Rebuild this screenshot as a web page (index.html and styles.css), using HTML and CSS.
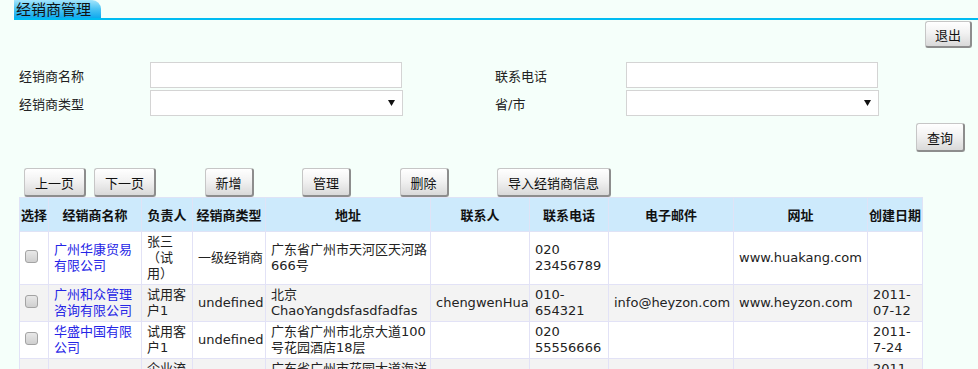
FILE: index.html
```html
<!DOCTYPE html>
<html lang="zh-CN">
<head>
<meta charset="utf-8">
<title>经销商管理</title>
<link rel="stylesheet" href="styles.css">
</head>
<body>
<div class="tabbar"><div class="tab">经销商管理</div></div>

<div class="exit-row"><button class="btn btn-exit" type="button">退出</button></div>

<form class="search">
  <label class="lbl">经销商名称</label>
  <input class="field" type="text">
  <span></span>
  <label class="lbl">联系电话</label>
  <input class="field" type="text">

  <label class="lbl">经销商类型</label>
  <div class="selbox"><select class="sel"><option></option></select><svg class="arrow" width="7" height="6" viewBox="0 0 7 6"><path d="M0 0H7L3.5 6Z" fill="#111"/></svg></div>
  <span></span>
  <label class="lbl">省/市</label>
  <div class="selbox"><select class="sel"><option></option></select><svg class="arrow" width="7" height="6" viewBox="0 0 7 6"><path d="M0 0H7L3.5 6Z" fill="#111"/></svg></div>
</form>

<div class="query-row"><button class="btn" type="button">查询</button></div>

<div class="actions">
  <div class="pager">
    <button class="btn" type="button">上一页</button>
    <button class="btn" type="button">下一页</button>
  </div>
  <button class="btn" type="button">新增</button>
  <button class="btn" type="button">管理</button>
  <button class="btn" type="button">删除</button>
  <button class="btn" type="button">导入经销商信息</button>
</div>

<table class="grid">
  <colgroup>
    <col style="width:29px"><col style="width:93px"><col style="width:51px"><col style="width:73px"><col style="width:165px"><col style="width:99px"><col style="width:79px"><col style="width:125px"><col style="width:134px"><col style="width:55px">
  </colgroup>
  <thead>
    <tr><th>选择</th><th>经销商名称</th><th>负责人</th><th>经销商类型</th><th>地址</th><th>联系人</th><th>联系电话</th><th>电子邮件</th><th>网址</th><th>创建日期</th></tr>
  </thead>
  <tbody>
    <tr>
      <td><input class="chk" type="checkbox"></td>
      <td><a class="name" href="#">广州华康贸易有限公司</a></td>
      <td>张三（试用）</td>
      <td>一级经销商</td>
      <td>广东省广州市天河区天河路666号</td>
      <td></td>
      <td>020 23456789</td>
      <td></td>
      <td>www.huakang.com</td>
      <td></td>
    </tr>
    <tr class="alt">
      <td><input class="chk" type="checkbox"></td>
      <td><a class="name" href="#">广州和众管理咨询有限公司</a></td>
      <td>试用客户1</td>
      <td>undefined</td>
      <td>北京ChaoYangdsfasdfadfas</td>
      <td>chengwenHua</td>
      <td>010-654321</td>
      <td>info@heyzon.com</td>
      <td>www.heyzon.com</td>
      <td>2011-07-12</td>
    </tr>
    <tr>
      <td><input class="chk" type="checkbox"></td>
      <td><a class="name" href="#">华盛中国有限公司</a></td>
      <td>试用客户1</td>
      <td>undefined</td>
      <td>广东省广州市北京大道100号花园酒店18层</td>
      <td></td>
      <td>020 55556666</td>
      <td></td>
      <td></td>
      <td>2011-7-24</td>
    </tr>
    <tr class="alt">
      <td><input class="chk" type="checkbox"></td>
      <td><a class="name" href="#">海洋集团</a></td>
      <td>企业流程客户</td>
      <td>undefined</td>
      <td>广东省广州市花园大道海洋大厦</td>
      <td></td>
      <td></td>
      <td></td>
      <td></td>
      <td>2011-08-01</td>
    </tr>
  </tbody>
</table>
</body>
</html>
```

FILE: styles.css
```css
* { box-sizing: border-box; }

body {
  margin: 0;
  overflow: hidden;
  background: #f5fffa;
  font-family: "DejaVu Sans", "Noto Sans CJK SC", sans-serif;
  font-size: 13px;
  color: #222;
}

.tabbar {
  display: flex;
  margin-left: 14px;
  height: 20px;
  border-bottom: 2px solid #00bcf2;
}

.tab {
  height: 18px;
  padding: 0 10px 0 2px;
  font-family: "Noto Sans CJK SC", sans-serif;
  font-size: 15px;
  line-height: 17px;
  color: #111;
  border-radius: 0 9px 0 0;
  background: linear-gradient(to bottom, #a4e5fc 0%, #4cc4f4 50%, #10a9ee 100%);
}

.btn {
  height: 29px;
  padding: 0 10px;
  font-family: "DejaVu Sans", "Noto Sans CJK SC", sans-serif;
  font-size: 13px;
  color: #111;
  background: linear-gradient(to bottom, #ffffff 0%, #f2f2f2 45%, #d9d9d9 100%);
  border: 1px solid #c6c6c6;
  border-right: 2px solid #8d8d8d;
  border-bottom: 2px solid #8d8d8d;
  border-radius: 3px;
  cursor: pointer;
}

.btn-exit { height: 27px; padding: 0 9px; }

.exit-row {
  display: flex;
  justify-content: flex-end;
  padding-right: 6px;
  margin-top: 1px;
}

.search {
  display: grid;
  grid-template-columns: 131px 253px 92px 131px 253px;
  grid-auto-rows: 26px;
  row-gap: 2px;
  margin: 14px 0 0 19px;
}

.lbl {
  display: flex;
  align-items: center;
  color: #222;
}

.field {
  width: 252px;
  height: 26px;
  border: 1px solid #d4d4d4;
  background: #fff;
  margin: 0;
}

.selbox {
  display: flex;
  align-items: center;
  width: 253px;
  height: 26px;
  padding-right: 7px;
  border: 1px solid #d4d4d4;
  background: #fff;
}

.sel {
  flex: 1;
  height: 100%;
  border: 0;
  background: transparent;
  appearance: none;
  -webkit-appearance: none;
  outline: none;
}

.arrow { flex: none; }

.query-row {
  display: flex;
  justify-content: flex-end;
  padding-right: 13px;
  margin-top: 7px;
}

.actions {
  display: flex;
  gap: 48.5px;
  margin: 16px 0 0 24px;
}

.pager {
  display: flex;
  gap: 8px;
}

.grid {
  margin-left: 19px;
  width: 903px;
  table-layout: fixed;
  border-collapse: collapse;
}

.grid th {
  height: 34px;
  padding: 0;
  background: #cdeafc;
  border: 1px solid #dfe3f6;
  font-weight: bold;
  color: #111;
  text-align: center;
  white-space: nowrap;
}

.grid td {
  padding: 2px 1px 2px 5px;
  line-height: 16px;
  border: 1px solid #e2e2f6;
  background: #fff;
  vertical-align: middle;
  color: #222;
}

.grid tr.alt td { background: #f3f3f3; }

.name {
  color: #2424e6;
  text-decoration: none;
}

.chk {
  -webkit-appearance: none;
  appearance: none;
  display: block;
  width: 13px;
  height: 13px;
  margin: 0 0 3px 0;
  border: 1px solid #a3a3a3;
  border-radius: 3px;
  background: linear-gradient(to bottom, #e8e8e8, #cfcfcf);
}
```
